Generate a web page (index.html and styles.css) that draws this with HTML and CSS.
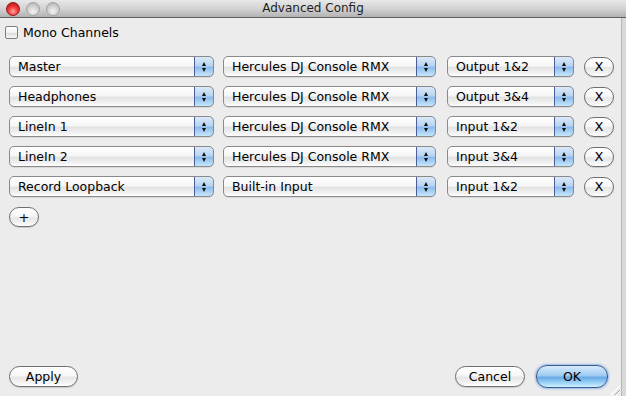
FILE: index.html
```html
<!DOCTYPE html>
<html>
<head>
<meta charset="utf-8">
<link rel="stylesheet" href="styles.css">
</head>
<body>
<div class="window">
  <div class="titlebar">
    <div class="lights">
      <span class="light red"></span>
      <span class="light gray"></span>
      <span class="light gray"></span>
    </div>
    <div class="title">Advanced Config</div>
  </div>
  <div class="body">
    <div class="content">
      <label class="check"><span class="box"></span><span>Mono Channels</span></label>
      <div class="rows">
        <div class="row">
          <div class="popup w1"><span class="ptext">Master</span><span class="step"><i class="up"></i><i class="dn"></i></span></div>
          <div class="popup w2"><span class="ptext">Hercules DJ Console RMX</span><span class="step"><i class="up"></i><i class="dn"></i></span></div>
          <div class="popup w3"><span class="ptext">Output 1&amp;2</span><span class="step"><i class="up"></i><i class="dn"></i></span></div>
          <div class="xbtn">X</div>
        </div>
        <div class="row">
          <div class="popup w1"><span class="ptext">Headphones</span><span class="step"><i class="up"></i><i class="dn"></i></span></div>
          <div class="popup w2"><span class="ptext">Hercules DJ Console RMX</span><span class="step"><i class="up"></i><i class="dn"></i></span></div>
          <div class="popup w3"><span class="ptext">Output 3&amp;4</span><span class="step"><i class="up"></i><i class="dn"></i></span></div>
          <div class="xbtn">X</div>
        </div>
        <div class="row">
          <div class="popup w1"><span class="ptext">LineIn 1</span><span class="step"><i class="up"></i><i class="dn"></i></span></div>
          <div class="popup w2"><span class="ptext">Hercules DJ Console RMX</span><span class="step"><i class="up"></i><i class="dn"></i></span></div>
          <div class="popup w3"><span class="ptext">Input 1&amp;2</span><span class="step"><i class="up"></i><i class="dn"></i></span></div>
          <div class="xbtn">X</div>
        </div>
        <div class="row">
          <div class="popup w1"><span class="ptext">LineIn 2</span><span class="step"><i class="up"></i><i class="dn"></i></span></div>
          <div class="popup w2"><span class="ptext">Hercules DJ Console RMX</span><span class="step"><i class="up"></i><i class="dn"></i></span></div>
          <div class="popup w3"><span class="ptext">Input 3&amp;4</span><span class="step"><i class="up"></i><i class="dn"></i></span></div>
          <div class="xbtn">X</div>
        </div>
        <div class="row">
          <div class="popup w1"><span class="ptext">Record Loopback</span><span class="step"><i class="up"></i><i class="dn"></i></span></div>
          <div class="popup w2"><span class="ptext">Built-in Input</span><span class="step"><i class="up"></i><i class="dn"></i></span></div>
          <div class="popup w3"><span class="ptext">Input 1&amp;2</span><span class="step"><i class="up"></i><i class="dn"></i></span></div>
          <div class="xbtn">X</div>
        </div>
      </div>
      <div class="plus">+</div>
    </div>
    <div class="footer">
      <div class="btn apply">Apply</div>
      <div class="spacer"></div>
      <div class="btn cancel">Cancel</div>
      <div class="btn ok">OK</div>
    </div>
    <div class="grip"></div>
  </div>
</div>
</body>
</html>
```
FILE: styles.css
```css
html, body {
  margin: 0;
  padding: 0;
}
body {
  width: 626px;
  height: 396px;
  overflow: hidden;
  background: #d9d9d9;
  font-family: "DejaVu Sans", "Lucida Grande", sans-serif;
  font-size: 12px;
  color: #000;
}
.window {
  width: 626px;
  height: 396px;
  display: flex;
  flex-direction: column;
}
.titlebar {
  height: 17px;
  border-bottom: 1px solid #5e5e5e;
  background: linear-gradient(#e8e8e8, #d3d3d3 50%, #b3b3b3);
  display: flex;
  align-items: center;
  position: relative;
}
.lights {
  display: flex;
  gap: 6px;
  padding-left: 6px;
  align-items: center;
  position: relative;
  z-index: 1;
}
.light {
  width: 14px;
  height: 14px;
  border-radius: 50%;
  box-sizing: border-box;
  border: 1px solid #9b9b9b;
}
.light.red {
  background: radial-gradient(circle at 50% 70%, #ffa5a5 0%, #f23a36 45%, #a80a0a 100%);
  border-color: #8d1a1a;
}
.light.gray {
  background: radial-gradient(circle at 50% 70%, #f2f2f2 0%, #d2d2d2 50%, #aaaaaa 100%);
  border-color: #a3a3a3;
}
.title {
  position: absolute;
  left: 0;
  right: 0;
  top: 0;
  height: 17px;
  line-height: 17px;
  text-align: center;
  font-size: 12px;
  color: #1e1e1e;
}
.body {
  flex: 1;
  width: 621px;
  background: #ececec;
  border-right: 1px solid #b8b8b8;
  display: flex;
  flex-direction: column;
  position: relative;
}
.content {
  padding: 7px 0 0 5px;
}
.check {
  display: flex;
  align-items: center;
  gap: 5px;
  height: 14px;
  font-size: 12.5px;
}
.box {
  width: 13px;
  height: 13px;
  box-sizing: border-box;
  border: 1px solid #7d7d7d;
  border-radius: 2px;
  background: linear-gradient(#ffffff, #f1f1f1 50%, #dcdcdc 55%, #f7f7f7);
}
.rows {
  margin-top: 17px;
  padding-left: 4px;
  display: flex;
  flex-direction: column;
  gap: 9px;
}
.row {
  display: flex;
  align-items: center;
  height: 21px;
}
.popup {
  height: 21px;
  box-sizing: border-box;
  border: 1px solid #8a8a8a;
  border-radius: 5px;
  background: linear-gradient(#ffffff, #f6f6f6 45%, #e3e3e3 55%, #f2f2f2 85%, #ffffff);
  display: flex;
  align-items: center;
  overflow: hidden;
  box-shadow: 0 1px 0 rgba(0,0,0,0.08);
}
.w1 { width: 205px; margin-right: 9px; }
.w2 { width: 213px; margin-right: 11px; }
.w3 { width: 127px; margin-right: 10px; }
.ptext {
  flex: 1;
  padding-left: 8px;
  font-size: 12.5px;
  white-space: nowrap;
}
.step {
  width: 20px;
  height: 21px;
  margin: -1px -1px -1px 0;
  box-sizing: border-box;
  border: 1px solid #4a5f9c;
  border-radius: 0 5px 5px 0;
  background: linear-gradient(#dbe9f8, #b9d5f3 45%, #8dbcec 55%, #c6e7fc);
  display: flex;
  flex-direction: column;
  align-items: center;
  justify-content: center;
  gap: 2px;
}
.step i {
  width: 0;
  height: 0;
  border-left: 2.5px solid transparent;
  border-right: 2.5px solid transparent;
}
.step .up { border-bottom: 4px solid #111; }
.step .dn { border-top: 4px solid #111; }
.xbtn, .plus, .btn {
  box-sizing: border-box;
  border: 1px solid #6f6f6f;
  border-radius: 10px;
  background: linear-gradient(#ffffff, #f7f7f7 45%, #e6e6e6 55%, #f4f4f4 85%, #ffffff);
  display: flex;
  align-items: center;
  justify-content: center;
  box-shadow: 0 1px 1px rgba(0,0,0,0.15);
}
.xbtn {
  width: 30px;
  height: 20px;
  font-size: 13px;
}
.plus {
  margin: 10px 0 0 4px;
  width: 30px;
  height: 20px;
  font-size: 13px;
}
.footer {
  margin-top: auto;
  display: flex;
  align-items: center;
  padding: 0 13px 8px 9px;
  height: 23px;
}
.spacer { flex: 1; }
.btn {
  height: 21px;
  border-radius: 11px;
  font-size: 12.5px;
}
.apply { width: 69px; }
.cancel { width: 70px; margin-right: 11px; }
.ok {
  width: 72px;
  height: 23px;
  border-color: #3f5a8c;
  background: linear-gradient(#d6ebfb, #9fcbf1 45%, #6aaae6 55%, #a7dbfb 85%, #d4f1ff);
  box-shadow: 0 0 2px 1px rgba(90,150,230,0.6);
}
.grip {
  position: absolute;
  right: 1px;
  bottom: 1px;
  width: 10px;
  height: 10px;
  background: repeating-linear-gradient(135deg, transparent 0 2px, #9a9a9a 2px 3px, #fff 3px 4px);
  clip-path: polygon(100% 0, 100% 100%, 0 100%);
}
```
